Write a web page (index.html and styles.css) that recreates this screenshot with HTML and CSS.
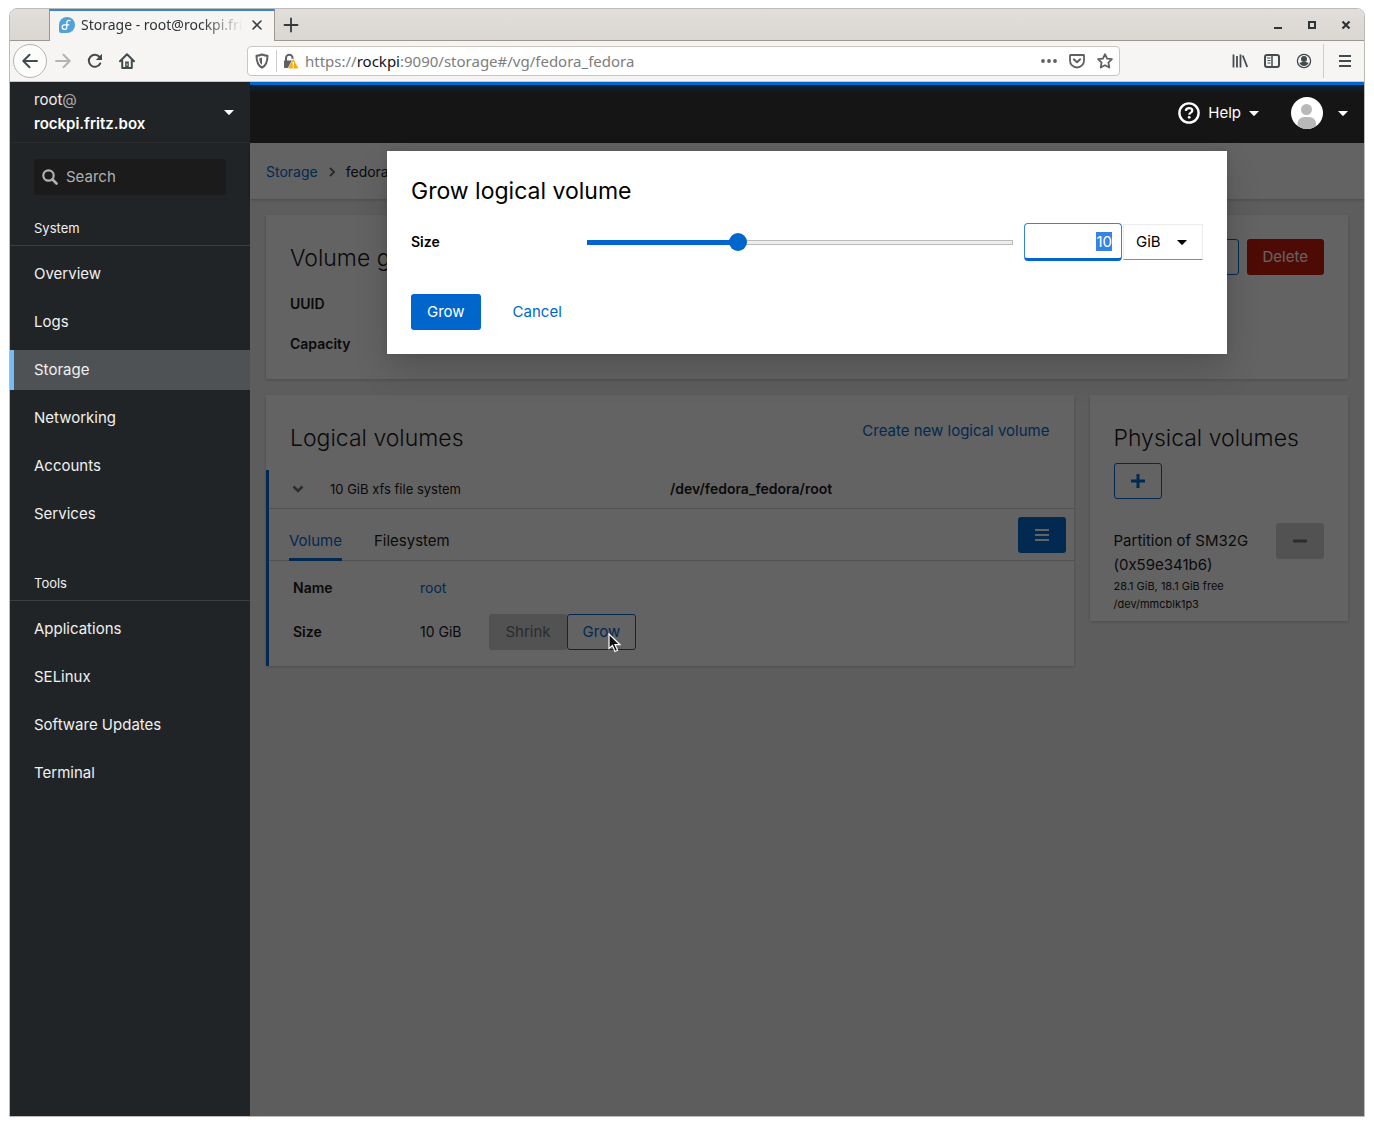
FILE: index.html
```html
<!DOCTYPE html>
<html lang="en">
<head>
<meta charset="utf-8">
<title>Storage - root@rockpi.fritz.box</title>
<link rel="stylesheet" href="styles.css">
</head>
<body>
<div class="window">
  <header class="titlebar">
    <div class="tab">
      <svg class="tab-logo" viewBox="0 0 16 16" width="16" height="16"><path d="M8 0a8 8 0 1 1 0 16H2a2 2 0 0 1-2-2V8a8 8 0 0 1 8-8z" fill="#51a2da"/><path d="M11 3.6c-1.700-.6-3.200.2-3.200 2v4.600a2.300 2.300 0 1 1-2.300-2.400h4.300" fill="none" stroke="#fff" stroke-width="1.300" stroke-linecap="round"/></svg>
      <span class="tab-title">Storage - root@rockpi.fritz.box</span>
      <button class="plain" aria-label="Close tab"><svg width="16" height="16" viewBox="0 0 16 16"><path d="M4 4l8 8M12 4l-8 8" stroke="#3a4044" stroke-width="1.600" stroke-linecap="round"/></svg></button>
    </div>
    <button class="plain new-tab" aria-label="New tab"><svg width="16" height="16" viewBox="0 0 16 16"><path d="M8 1.500v13M1.500 8h13" stroke="#33393b" stroke-width="1.800" stroke-linecap="round"/></svg></button>
    <div class="window-buttons">
      <button class="plain" aria-label="Minimize"><svg width="16" height="16" viewBox="0 0 16 16"><path d="M4 11h8" stroke="#2e3436" stroke-width="2"/></svg></button>
      <button class="plain" aria-label="Maximize"><svg width="16" height="16" viewBox="0 0 16 16"><path d="M5 5h6v6H5z" fill="none" stroke="#2e3436" stroke-width="2"/></svg></button>
      <button class="plain" aria-label="Close"><svg width="16" height="16" viewBox="0 0 16 16"><path d="M4.500 4.500l7 7M11.500 4.500l-7 7" stroke="#2e3436" stroke-width="2.200"/></svg></button>
    </div>
  </header>

  <nav class="toolbar" aria-label="Browser">
    <div class="nav-buttons">
      <button class="plain back" aria-label="Back"><svg width="16" height="16" viewBox="0 0 16 16"><path d="M15 8H1.500M7.500 1.800L1.300 8l6.200 6.200" fill="none" stroke="#444b4e" stroke-width="2" stroke-linecap="round" stroke-linejoin="round"/></svg></button>
      <button class="plain" aria-label="Forward"><svg width="16" height="16" viewBox="0 0 16 16"><path d="M1 8h13.500M8.500 1.800L14.700 8l-6.200 6.200" fill="none" stroke="#b3b3b1" stroke-width="2" stroke-linecap="round" stroke-linejoin="round"/></svg></button>
      <button class="plain" aria-label="Reload"><svg width="16" height="16" viewBox="0 0 16 16"><path d="M13.200 10.500A6 6 0 1 1 12.500 4" fill="none" stroke="#444b4e" stroke-width="2" stroke-linecap="round"/><path d="M15 .8v6.200H8.800z" fill="#444b4e"/></svg></button>
      <button class="plain" aria-label="Home"><svg width="16" height="16" viewBox="0 0 16 16"><path d="M1 8.300l7-7 7 7M3.200 7.500V15h9.600V7.500" fill="none" stroke="#444b4e" stroke-width="2" stroke-linecap="round" stroke-linejoin="round"/><path d="M6.200 8.500h3.600V15H6.200z" fill="#444b4e"/><path d="M8 10.500v2" stroke="#f6f5f4"/></svg></button>
    </div>
    <div class="urlbar">
      <svg width="16" height="16" viewBox="0 0 16 16"><path d="M8 1.500c2 .9 4 1.200 5.500 1.200 0 5.500-.8 9.500-5.500 12-4.700-2.500-5.500-6.500-5.500-12C4 2.700 6 2.400 8 1.500z" fill="none" stroke="#606060" stroke-width="2" stroke-linejoin="round"/><path d="M8 4.500v7.300C6 10.500 5.300 8.500 5.300 5.200z" fill="#606060"/></svg>
      <span class="url-sep"></span>
      <svg width="16" height="16" viewBox="0 0 16 16"><path d="M1 7.500h10.500V15H2a1 1 0 0 1-1-1z" fill="#606060"/><path d="M3 8V5a3.300 3.300 0 0 1 6.600 0v1" fill="none" stroke="#606060" stroke-width="2"/><path d="M10.200 5.500L16 15.700H4.800z" fill="#ffa800" stroke="#fff" stroke-width=".6"/><path d="M10.300 9v3.400M10.300 13.300v1.300" stroke="#fff" stroke-width="1.400"/></svg>
      <span class="url">https://<b>rockpi</b>:9090/storage#/vg/fedora_fedora</span>
      <span class="url-actions">
        <svg width="16" height="16" viewBox="0 0 16 16"><g fill="#606060"><circle cx="2" cy="8" r="1.900"/><circle cx="8" cy="8" r="1.900"/><circle cx="14" cy="8" r="1.900"/></g></svg>
        <svg width="16" height="16" viewBox="0 0 16 16"><path d="M1.500 2h13a.5.5 0 0 1 .5.500V7.500a7 7 0 0 1-14 0V2.500a.5.5 0 0 1 .5-.5z" fill="none" stroke="#606060" stroke-width="1.800"/><path d="M4.800 6.300L8 9.300l3.200-3" fill="none" stroke="#606060" stroke-width="1.900" stroke-linecap="round" stroke-linejoin="round"/></svg>
        <svg width="16" height="16" viewBox="0 0 16 16"><path d="M8 1.200l2.100 4.400 4.800.6-3.500 3.400.9 4.900L8 12.200l-4.300 2.300.9-4.900L1.100 6.200l4.800-.6z" fill="none" stroke="#606060" stroke-width="1.800" stroke-linejoin="round"/></svg>
      </span>
    </div>
    <div class="nav-buttons">
      <button class="plain" aria-label="Library"><svg width="16" height="16" viewBox="0 0 16 16"><path d="M1.500 1.500v13M5 3v11.500M8.500 1.500v13M10.700 2.500l4.500 11.500" fill="none" stroke="#444b4e" stroke-width="1.800"/></svg></button>
      <button class="plain" aria-label="Sidebars"><svg width="16" height="16" viewBox="0 0 16 16"><rect x="1" y="2" width="14" height="12" rx="2" fill="none" stroke="#444b4e" stroke-width="2"/><path d="M8 2v12" stroke="#444b4e" stroke-width="1.500"/><path d="M3 5h3.500M3.500 7.500h3M3.500 10h3" stroke="#444b4e"/></svg></button>
      <button class="plain" aria-label="Account"><svg width="16" height="16" viewBox="0 0 16 16"><circle cx="8" cy="8" r="6.600" fill="none" stroke="#444b4e" stroke-width="1.300"/><circle cx="8" cy="6" r="3" fill="#444b4e"/><path d="M3.500 10c1.500-.6 2-1 4.500-1s3 .4 4.500 1c-.8 2-2.500 3-4.500 3s-3.700-1-4.500-3z" fill="#444b4e"/></svg></button>
    </div>
    <span class="toolbar-sep"></span>
    <button class="plain" aria-label="Open menu"><svg width="16" height="16" viewBox="0 0 16 16"><path d="M2 3h12M2 8h12M2 13h12" stroke="#444b4e" stroke-width="2"/></svg></button>
  </nav>

  <div class="shell">
    <aside class="sidebar">
      <button class="host">
        <span class="host-name"><span>root<span class="at">@</span></span><strong>rockpi.fritz.box</strong></span>
        <svg width="10" height="5" viewBox="0 0 10 5"><path d="M0 0h10L5.700 4.600a1 1 0 0 1-1.400 0z" fill="#fff"/></svg>
      </button>
      <label class="search">
        <svg width="16" height="16" viewBox="0 0 16 16"><circle cx="6.500" cy="6.500" r="5.200" fill="none" stroke="#b0b1b2" stroke-width="2.200"/><path d="M10.500 10.500l4 4" stroke="#b0b1b2" stroke-width="2.600" stroke-linecap="round"/></svg>
        <input type="text" placeholder="Search" aria-label="Search">
      </label>
      <nav class="menu" aria-label="System">
        <h2>System</h2>
        <ul>
          <li><a href="#overview">Overview</a></li>
          <li><a href="#logs">Logs</a></li>
          <li><a class="current" href="#storage">Storage</a></li>
          <li><a href="#networking">Networking</a></li>
          <li><a href="#accounts">Accounts</a></li>
          <li><a href="#services">Services</a></li>
        </ul>
      </nav>
      <nav class="menu" aria-label="Tools">
        <h2>Tools</h2>
        <ul>
          <li><a href="#applications">Applications</a></li>
          <li><a href="#selinux">SELinux</a></li>
          <li><a href="#updates">Software Updates</a></li>
          <li><a href="#terminal">Terminal</a></li>
        </ul>
      </nav>
    </aside>

    <div class="content">
      <header class="masthead">
        <button class="plain help">
          <svg width="22" height="22" viewBox="0 0 22 22"><circle cx="11" cy="11" r="9.600" fill="none" stroke="#fff" stroke-width="2.400"/><path d="M7.800 8.800C8 7 9.300 6.200 11 6.200c2 0 3.300 1 3.300 2.500 0 2-3 2-3 4" fill="none" stroke="#fff" stroke-width="2.200"/><circle cx="11.200" cy="15.300" r="1.400" fill="#fff"/></svg>
          Help
          <svg width="10" height="5" viewBox="0 0 10 5"><path d="M0 0h10L5.700 4.600a1 1 0 0 1-1.400 0z" fill="#fff"/></svg>
        </button>
        <button class="plain user" aria-label="Session">
          <svg width="32" height="32" viewBox="0 0 32 32"><defs><clipPath id="avatar"><circle cx="16" cy="16" r="16"/></clipPath></defs><g clip-path="url(#avatar)"><path d="M0 0h32v32H0z" fill="#fff"/><circle cx="15.500" cy="12.500" r="5.500" fill="#b8b8b8"/><path d="M6.500 32v-5c0-4 3-7 7-7h4.500c4 0 7 3 7 7v5z" fill="#b8b8b8"/></g></svg>
          <svg width="10" height="5" viewBox="0 0 10 5"><path d="M0 0h10L5.700 4.600a1 1 0 0 1-1.400 0z" fill="#fff"/></svg>
        </button>
      </header>

      <main class="page">
        <nav class="breadcrumb" aria-label="Breadcrumb">
          <a href="#storage">Storage</a>
          <svg width="6" height="10" viewBox="0 0 6 10"><path d="M1 1l4 4-4 4" fill="none" stroke="#6a6e73" stroke-width="2"/></svg>
          <span>fedora_fedora</span>
        </nav>

        <div class="cards">
          <section class="card group">
            <div class="card-head">
              <h1>Volume group</h1>
              <div class="actions">
                <button class="btn secondary">Rename</button>
                <button class="btn danger">Delete</button>
              </div>
            </div>
            <dl class="group-facts">
              <dt>UUID</dt>
              <dt>Capacity</dt>
            </dl>
          </section>

          <section class="card logical">
            <div class="card-head">
              <h1>Logical volumes</h1>
              <a class="create" href="#create">Create new logical volume</a>
            </div>
            <div class="volume">
              <div class="volume-row">
                <button class="plain toggle" aria-label="Collapse"><svg width="12" height="8" viewBox="0 0 12 8"><path d="M1.500 1.500L6 6l4.500-4.500" fill="none" stroke="#6a6e73" stroke-width="2.600"/></svg></button>
                <span>10 GiB xfs file system</span>
                <strong>/dev/fedora_fedora/root</strong>
              </div>
              <div class="tabs">
                <button class="plain active">Volume</button>
                <button class="plain">Filesystem</button>
                <button class="btn primary icon" aria-label="Menu"><svg width="14" height="14" viewBox="0 0 14 14"><path d="M0 2h14M0 7h14M0 12h14" stroke="#fff" stroke-width="2"/></svg></button>
              </div>
              <dl class="facts">
                <dt>Name</dt>
                <dd><a href="#rename">root</a></dd>
                <dt>Size</dt>
                <dd>
                  <span>10 GiB</span>
                  <span class="size-buttons">
                    <button class="btn disabled" disabled>Shrink</button>
                    <button class="btn secondary pointed">Grow<svg class="pointer" width="14" height="20" viewBox="0 0 14 20"><path d="M1 1v14.500l3.400-3 2.600 6 2.600-1.200-2.600-5.600h5z" fill="#111" stroke="#fff" stroke-width="1.200"/></svg></button>
                  </span>
                </dd>
              </dl>
            </div>
          </section>

          <section class="card physical">
            <h1>Physical volumes</h1>
            <button class="btn secondary icon" aria-label="Add"><svg width="14" height="14" viewBox="0 0 14 14"><path d="M7 0v14M0 7h14" stroke="#06c" stroke-width="3"/></svg></button>
            <div class="disk">
              <div class="disk-info">
                <p>Partition of SM32G (0x59e341b6)</p>
                <small>28.1 GiB, 18.1 GiB free</small>
                <small>/dev/mmcblk1p3</small>
              </div>
              <button class="btn disabled icon" aria-label="Remove" disabled><svg width="14" height="14" viewBox="0 0 14 14"><path d="M0 7h14" stroke="#6a6e73" stroke-width="3"/></svg></button>
            </div>
          </section>
        </div>

        <div class="backdrop">
          <form class="dialog" role="dialog" aria-labelledby="dialog-title">
            <h1 id="dialog-title">Grow logical volume</h1>
            <div class="size-row">
              <label for="size">Size</label>
              <div class="slider"><input type="range" min="0" max="281" value="100" aria-label="Size slider"></div>
              <input class="size-input" id="size" type="text" value="10">
              <div class="unit">
                <select aria-label="Unit"><option>MiB</option><option selected>GiB</option><option>TiB</option></select>
                <svg width="10" height="5" viewBox="0 0 10 5"><path d="M0 0h10L5.700 4.600a1 1 0 0 1-1.400 0z" fill="#000"/></svg>
              </div>
            </div>
            <div class="dialog-actions">
              <button class="btn primary" type="button">Grow</button>
              <button class="btn link" type="button">Cancel</button>
            </div>
          </form>
        </div>
      </main>
    </div>
  </div>
</div>
<script src="script.js"></script>
</body>
</html>
```
FILE: script.js
```js
// The size field opens focused with its value selected.
const size = document.getElementById('size');
size.focus();
size.select();
```
FILE: styles.css
```css
* { box-sizing: border-box; }

body {
  margin: 0;
  padding: 8px 9px 9px;
  background: #fff;
  color: #151515;
  font: 15px/24px Inter, "Open Sans", sans-serif;
}

h1, h2, p, ul, dl, dd { margin: 0; padding: 0; }
h1 { font-size: 23px; line-height: 32px; font-weight: 400; }
ul { list-style: none; }
a { color: #06c; text-decoration: none; }
button, input, select { font: inherit; color: inherit; }
svg { display: block; flex: none; }

.plain {
  display: flex;
  align-items: center;
  justify-content: center;
  padding: 0;
  border: 0;
  background: none;
}

/* Browser window */
.window {
  display: flex;
  flex-direction: column;
  min-height: calc(100vh - 17px);
  border: 1px solid #bdbbb8;
  border-radius: 8px 8px 0 0;
  overflow: hidden;
}

.titlebar {
  display: flex;
  height: 32px;
  padding: 0 10px 0 39px;
  border-bottom: 1px solid #9c9791;
  background: linear-gradient(#e1dedb, #dad6d2);
  font-family: "Noto Sans", sans-serif;
}

.tab {
  display: flex;
  align-items: center;
  gap: 6px;
  width: 226px;
  height: 32px;
  padding: 0 9px 3px;
  border: 1px solid #9c9791;
  border-width: 0 1px;
  border-top: 2px solid #3584e4;
  background: #f6f5f4;
  color: #2e3436;
}

.tab-title {
  flex: 1;
  overflow: hidden;
  white-space: nowrap;
  font-size: 14px;
  mask-image: linear-gradient(90deg, #000 75%, transparent);
}

.new-tab { width: 32px; }
.window-buttons { display: flex; gap: 18px; margin-left: auto; }

.toolbar {
  display: flex;
  align-items: center;
  height: 41px;
  padding: 0 11px 0 3px;
  border-bottom: 1px solid #cbc7c3;
  background: #f6f5f4;
}

.nav-buttons { display: flex; align-items: center; gap: 16px; }
.back { width: 34px; height: 34px; margin-right: -8px; border: 1px solid #b6b4b1; border-radius: 50%; background: #fcfcfb; }

.urlbar {
  display: flex;
  flex: 1;
  align-items: center;
  gap: 6px;
  height: 30px;
  margin: 0 112px;
  padding: 0 6px;
  border: 1px solid #c9c5c0;
  border-radius: 4px;
  background: #fff;
  color: #7d7d7d;
  font: 15px/24px "Noto Sans", sans-serif;
}

.url { flex: 1; }
.url b { color: #111; font-weight: 400; }
.url-sep { width: 1px; height: 22px; background: #cfccc9; }
.url-actions { display: flex; gap: 12px; }
.toolbar-sep { width: 1px; height: 34px; margin: 0 13px 0 11px; background: #cfccc9; }

/* Sidebar */
.shell { display: flex; flex: 1; }
.sidebar { width: 240px; flex: none; background: #212427; color: #f0f0f0; }

.host {
  display: flex;
  align-items: center;
  justify-content: space-between;
  width: 100%;
  height: 61px;
  padding: 0 16px 0 24px;
  border: 0;
  border-bottom: 1px solid #2b2b2b;
  background: none;
  text-align: left;
}

.host-name { display: flex; flex-direction: column; }
.host strong { color: #fff; font-weight: 600; }
.at { color: #a9abac; }

.search {
  display: flex;
  align-items: center;
  gap: 8px;
  height: 36px;
  margin: 16px 24px 22px;
  padding: 0 8px;
  border-radius: 3px;
  background: #1b1b1b;
}

.search input { width: 100%; padding: 0; border: 0; outline: 0; background: none; }
.search input::placeholder { color: #b0b1b2; opacity: 1; }

.menu + .menu { margin-top: 38px; }
.menu h2 { padding: 0 24px 6px; border-bottom: 1px solid #3c3f42; font-size: 13px; line-height: 22px; font-weight: 400; }
.menu ul { display: grid; gap: 8px; padding-top: 8px; }
.menu a { display: block; padding: 8px 24px; color: #f0f0f0; }
.menu .current { padding-left: 20px; border-left: 4px solid #73bcf7; background: #4f5255; }

/* Masthead */
.content { display: flex; flex: 1; flex-direction: column; min-width: 0; }

.masthead {
  display: flex;
  align-items: center;
  justify-content: flex-end;
  gap: 32px;
  height: 61px;
  padding: 0 16px 2px;
  border-top: 3px solid #06c;
  background: linear-gradient(#0e2438, #151515 8px);
  color: #fff;
}

.help { gap: 8px; }
.user { gap: 15px; }

/* Page */
.page { position: relative; flex: 1; background: #f0f0f0; }

.breadcrumb {
  display: flex;
  align-items: center;
  gap: 11px;
  height: 56px;
  padding: 2px 16px 0;
  background: #fff;
  box-shadow: 0 1px 3px rgba(3, 3, 3, 0.2);
  font-size: 14px;
}

.cards { display: grid; grid-template-columns: repeat(12, 1fr); gap: 16px; align-items: start; padding: 16px; }
.card { background: #fff; box-shadow: 0 1px 3px rgba(3, 3, 3, 0.2); }
.card h1 { font-weight: 300; }
.card-head { display: flex; justify-content: space-between; }

.group { grid-column: span 12; padding: 24px 24px 23px; }
.group h1 { padding-top: 3px; }
.group-facts { display: grid; gap: 16px; padding-top: 17px; }
.actions { display: flex; gap: 8px; }
dt { font-size: 14px; font-weight: 600; }

.btn {
  height: 36px;
  padding: 0 15px;
  border: 1px solid transparent;
  border-radius: 3px;
  background: none;
  line-height: 24px;
}

.primary { background: #06c; color: #fff; }
.secondary { border-color: #06c; color: #06c; }
.danger { background: #c9190b; color: #fff; }
.disabled { background: #d2d2d2; color: #6a6e73; }
.link { color: #06c; }
.icon { display: flex; align-items: center; justify-content: center; width: 48px; padding: 0; flex: none; }

.logical { grid-column: span 9; }
.logical .card-head { padding: 24px 24px 16px; }
.logical h1 { padding-top: 3px; }
.volume { border-left: 3px solid #06c; font-size: 14px; }

.volume-row {
  display: grid;
  grid-template-columns: 38px 340px 1fr;
  align-items: center;
  height: 39px;
  padding-left: 23px;
  border-bottom: 1px solid #d2d2d2;
  font-size: 13px;
}

.toggle { justify-self: start; }
.volume-row strong { font-size: 14px; font-weight: 600; }

.tabs { display: flex; gap: 32px; height: 52px; padding: 8px 8px 0 20px; border-bottom: 1px solid #d2d2d2; font-size: 15px; }
.tabs .plain { height: 44px; padding-top: 6px; border-bottom: 3px solid transparent; }
.tabs .active { border-color: #06c; color: #06c; }
.tabs .icon { margin-left: auto; }

.facts {
  display: grid;
  grid-template-columns: 127px 1fr;
  row-gap: 14px;
  align-items: center;
  padding: 15px 24px 16px;
}

.facts dd { display: flex; align-items: center; gap: 28px; }
.size-buttons { display: flex; font-size: 15px; }
.pointed { position: relative; }
.pointer { position: absolute; z-index: 3; left: 40px; top: 18px; }

.physical { grid-column: span 3; padding: 27px 24px 8px; }
.physical h1 { margin-bottom: 9px; }
.disk { display: flex; justify-content: space-between; gap: 16px; padding-top: 24px; }
.disk-info { padding-top: 6px; }
.disk small { display: block; font-size: 11px; line-height: 18px; }

/* Dialog */
.backdrop { position: absolute; z-index: 2; inset: 0; padding: 8px; background: rgba(3, 3, 3, 0.62); }

.dialog {
  max-width: 840px;
  margin: 0 auto;
  padding: 24px;
  background: #fff;
  color: #000;
  box-shadow: 0 16px 32px rgba(3, 3, 3, 0.16), 0 0 8px rgba(3, 3, 3, 0.1);
}

.size-row { display: flex; align-items: center; margin: 16px 0 33px; }
.size-row label { width: 176px; font-size: 14px; font-weight: 600; }

.slider {
  display: flex;
  flex: 1;
  align-items: center;
  height: 5px;
  margin-right: 11px;
  border-right: 1px solid #bbb;
  background:
    linear-gradient(90deg, #06c 36%, transparent 36%),
    linear-gradient(#bbb 1px, #ededed 1px, #ededed 4px, #bbb 4px);
}

.slider input { flex: 1; height: 18px; margin: 0 -9px; appearance: none; background: none; }
.slider input::-webkit-slider-thumb { width: 18px; height: 18px; appearance: none; border-radius: 50%; background: #06c; }

.size-input {
  width: 98px;
  height: 38px;
  padding: 0 9px;
  border: 1px solid #3584e4;
  border-bottom: 3px solid #06c;
  border-radius: 4px;
  outline: 0;
  text-align: right;
}

.size-input::selection { background: #3584e4; color: #fff; }

.unit { position: relative; width: 80px; margin-left: 1px; }
.unit select { width: 100%; height: 36px; padding: 0 12px; appearance: none; border: 1px solid #ededed; border-bottom-color: #8a8d90; background: #fff; }
.unit svg { position: absolute; right: 16px; top: 16px; pointer-events: none; }
.dialog-actions { display: flex; gap: 16px; }
```
